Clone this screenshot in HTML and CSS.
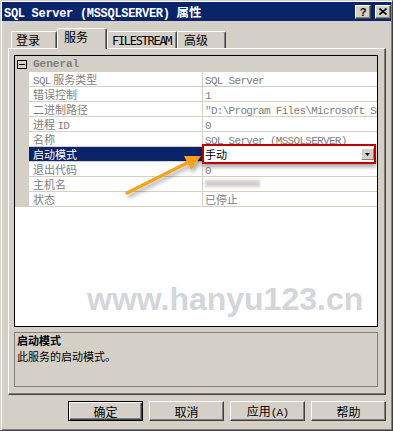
FILE: index.html
```html
<!doctype html>
<html>
<head>
    <meta charset="utf-8">
    <title>SQL Server (MSSQLSERVER) 属性</title>
    <link rel="stylesheet" href="styles.css">
</head>
<body>
    <div class="win">
        <div class="caption">
            <span class="captext">SQL Server (MSSQLSERVER) <span class="zh">属性</span></span>
            <span class="capbtns">
                <span class="capbtn">?</span>
                <span class="capbtn"><svg width="8" height="7" viewBox="0 0 8 7"><path d="M0.5 0.5 L7.5 6.5 M7.5 0.5 L0.5 6.5" stroke="#000" stroke-width="1.6"/></svg></span>
            </span>
        </div>
        <div class="main">
            <ul class="tabs">
                <li class="t1">登录</li>
                <li class="t2 cur">服务</li>
                <li class="t3"><span class="en">FILESTREAM</span></li>
                <li class="t4">高级</li>
            </ul>
            <div class="panel">
                <div class="grid">
                    <div class="cat"><span class="tog"></span><span class="en b">General</span></div>
                    <div class="props">
                        <div class="row"><div class="name"><span class="en">SQL</span> 服务类型</div><div class="val"><span class="en">SQL Server</span></div></div>
                        <div class="row"><div class="name">错误控制</div><div class="val"><span class="en">1</span></div></div>
                        <div class="row"><div class="name">二进制路径</div><div class="val"><span class="en">"D:\Program Files\Microsoft SQL Server\MSSQL10.MSSQLSERVER\MSSQL\Binn\sqlservr.exe" -sMSSQLSERVER</span></div></div>
                        <div class="row"><div class="name">进程 <span class="en">ID</span></div><div class="val"><span class="en">0</span></div></div>
                        <div class="row"><div class="name">名称</div><div class="val"><span class="en">SQL Server (MSSQLSERVER)</span></div></div>
                        <div class="row sel">
                            <div class="name">启动模式</div>
                            <div class="val">
                                <div class="combo">手动<span class="drop"><svg width="5" height="3" viewBox="0 0 5 3"><path d="M0 0 H5 L2.5 3 Z" fill="#000"/></svg></span></div>
                            </div>
                        </div>
                        <div class="row"><div class="name">退出代码</div><div class="val"><span class="en">0</span></div></div>
                        <div class="row"><div class="name">主机名</div><div class="val"><span class="blur"></span></div></div>
                        <div class="row"><div class="name">状态</div><div class="val">已停止</div></div>
                    </div>
                    <div class="blank"><span class="mark">www.hanyu123.cn</span></div>
                </div>
                <div class="desc">
                    <p class="dt">启动模式</p>
                    <p>此服务的启动模式。</p>
                </div>
            </div>
            <div class="btns">
                <button class="btn def">确定</button>
                <button class="btn">取消</button>
                <button class="btn">应用<span class="en">(A)</span></button>
                <button class="btn">帮助</button>
            </div>
        </div>
    </div>
    <svg class="arrow" width="393" height="431" viewBox="0 0 393 431">
        <defs>
            <filter id="sh" x="-20%" y="-20%" width="140%" height="160%">
                <feDropShadow dx="2" dy="3" stdDeviation="2" flood-color="#000" flood-opacity="0.35"/>
            </filter>
        </defs>
        <g filter="url(#sh)">
            <line x1="127" y1="193" x2="189" y2="162" stroke="#f7a11c" stroke-width="3.2" stroke-linecap="round"/>
            <polygon points="184,156 201,156 191,170" fill="#f7a11c"/>
        </g>
    </svg>
</body>
</html>
```

FILE: styles.css
```css
* {
    box-sizing: border-box;
}
body {
    margin: 0;
    position: relative;
    background: #d4d0c8;
    font-family: "Noto Sans CJK SC", sans-serif;
    font-size: 11px;
    color: #000;
}
ul {
    margin: 0;
    padding: 0;
    list-style: none;
}
p {
    margin: 0;
}
.en {
    font-family: "Liberation Mono", monospace;
    font-size: 11px;
    letter-spacing: -0.7px;
}
.en.b {
    font-weight: bold;
    letter-spacing: 0;
}

/* window frame */
.win {
    width: 393px;
    height: 431px;
    padding: 1px;
    border: 1px solid;
    border-color: #d4d0c8 #404040 #404040 #d4d0c8;
    box-shadow: inset 1px 1px 0 #fff, inset -1px -1px 0 #808080;
}
.caption {
    height: 19px;
    background: #0a246a;
    color: #fff;
    display: flex;
    align-items: center;
    justify-content: space-between;
    padding-left: 2px;
}
.captext {
    font-family: "Liberation Mono", monospace;
    font-weight: bold;
    font-size: 12px;
    letter-spacing: -0.3px;
    white-space: nowrap;
}
.captext .zh {
    font-family: "Noto Sans CJK SC", sans-serif;
    font-size: 12.5px;
    letter-spacing: 0;
}
.capbtns {
    display: flex;
    gap: 4px;
}
.capbtn {
    width: 16px;
    height: 14px;
    background: #d4d0c8;
    border: 1px solid;
    border-color: #fff #404040 #404040 #fff;
    box-shadow: inset -1px -1px 0 #808080;
    color: #000;
    font: bold 11px "Liberation Sans", sans-serif;
    line-height: 12px;
    text-align: center;
    display: flex;
    align-items: center;
    justify-content: center;
}

.main {
    padding: 7px 5px 0 6px;
}

/* tabs */
.tabs {
    display: flex;
    align-items: flex-end;
    height: 20px;
    padding-left: 3px;
}
.tabs li {
    height: 17px;
    border-top: 1px solid #fff;
    border-left: 1px solid #fff;
    border-right: 1px solid #404040;
    border-radius: 2px 2px 0 0;
    box-shadow: inset -1px 0 0 #808080;
    padding-left: 4px;
    font-size: 12px;
    line-height: 15px;
    background: #d4d0c8;
    white-space: nowrap;
}
.tabs .t1 { width: 46px; }
.tabs .t2 { width: 50px; padding-left: 6px; }
.tabs .t3 { width: 70px; padding-left: 4px; }
.tabs .t4 { width: 49px; padding-left: 6px; }
.tabs .t3 .en {
    font-family: "DejaVu Sans Mono", monospace;
    font-size: 12px;
    letter-spacing: -1.3px;
}
.tabs .cur {
    height: 21px;
    margin-bottom: -1px;
    position: relative;
    z-index: 1;
}

.panel {
    height: 347px;
    border: 1px solid;
    border-color: #fff #404040 #404040 #fff;
    box-shadow: inset -1px -1px 0 #808080;
    padding: 6px 7px 7px 5px;
}

/* property grid */
.grid {
    height: 272px;
    border: 1px solid #000;
    background: #fff;
    display: flex;
    flex-direction: column;
    overflow: hidden;
}
.cat {
    height: 16px;
    background: #d4d0c8;
    display: flex;
    align-items: center;
    color: #808080;
}
.tog {
    width: 10px;
    height: 9px;
    border: 1px solid #000;
    margin: 0 6px 0 2px;
    position: relative;
}
.tog:after {
    content: "";
    position: absolute;
    left: 1px;
    right: 1px;
    top: 3px;
    height: 1px;
    background: #000;
}
.props {
    border-left: 14px solid #d4d0c8;
}
.row {
    display: flex;
    height: 15px;
    border-bottom: 1px solid #d4d0c8;
    color: #808080;
    line-height: 14px;
    white-space: nowrap;
}
.name {
    flex: none;
    width: 174px;
    border-right: 1px solid #d4d0c8;
    padding-left: 4px;
    overflow: hidden;
}
.val {
    flex: 1;
    min-width: 0;
    padding-left: 2px;
    overflow: hidden;
}
.sel .name {
    background: #0a246a;
    color: #fff;
}
.sel .val {
    overflow: visible;
    position: relative;
}
.combo {
    position: absolute;
    left: -1px;
    top: -3px;
    width: 174px;
    height: 20px;
    border: 2px solid #c00000;
    background: #fff;
    color: #000;
    padding-left: 1px;
    line-height: 16px;
    box-shadow: 0 3px 4px rgba(0, 0, 0, 0.35);
    z-index: 2;
}
.drop {
    position: absolute;
    right: 0;
    top: 2px;
    width: 13px;
    height: 12px;
    background: #d4d0c8;
    border: 1px solid;
    border-color: #fff #808080 #808080 #fff;
    display: flex;
    align-items: center;
    justify-content: center;
}
.blur {
    display: inline-block;
    width: 55px;
    height: 7px;
    margin-top: 3px;
    vertical-align: top;
    background: #cfcfcf;
    filter: blur(1.5px);
}
.blank {
    flex: 1;
    padding: 76px 0 0 72px;
}
.mark {
    font: bold 32px/32px "Liberation Sans", sans-serif;
    color: #d3d6da;
    white-space: nowrap;
}

.desc {
    height: 55px;
    margin-top: 5px;
    border: 1px solid #808080;
    padding: 0 2px;
    line-height: 16px;
}
.desc p {
    height: 16px;
}
.desc .dt {
    margin-top: -1px;
    font-weight: bold;
}

/* dialog buttons */
.btns {
    display: flex;
    justify-content: flex-end;
    gap: 6px;
    margin-top: 6px;
}
.btn {
    width: 75px;
    height: 20px;
    margin: 0;
    padding: 0;
    background: #d4d0c8;
    border: 1px solid;
    border-color: #fff #404040 #404040 #fff;
    box-shadow: inset -1px -1px 0 #808080;
    font-family: "Noto Sans CJK SC", sans-serif;
    font-size: 12px;
    line-height: 17px;
    color: #000;
}
.btn.def {
    border-color: #000;
    box-shadow: inset 1px 1px 0 #fff, inset -1px -1px 0 #404040, inset -2px -2px 0 #808080;
}

.arrow {
    position: absolute;
    left: 0;
    top: 0;
    pointer-events: none;
}
```
